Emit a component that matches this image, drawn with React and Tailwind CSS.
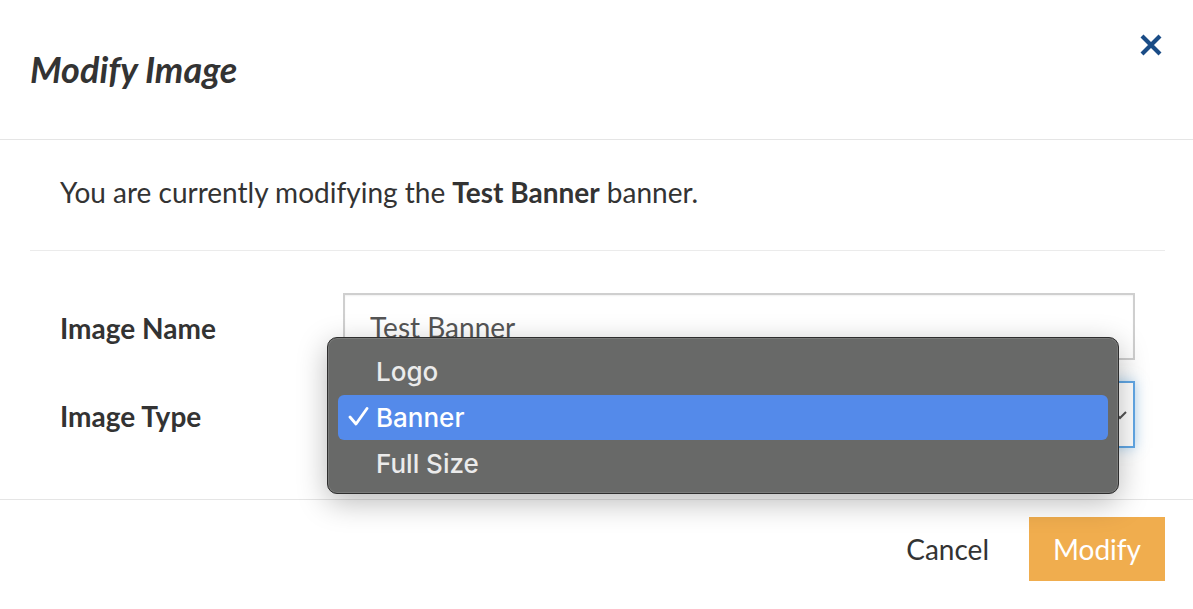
import React from "react";

export default function App() {
  return (
    <div className="relative w-full h-[609px] bg-white text-[#333] overflow-hidden" style={{ fontFamily: "Lato, 'Noto Sans', sans-serif" }}>
      {/* Header */}
      <div className="relative h-[140px] border-b border-[#e5e5e5] px-[30px]">
        <h1 className="pt-[48px] text-[36px] leading-[42px] font-bold italic text-[#333]">Modify Image</h1>
        <button className="absolute top-[33px] right-[30px] w-[24px] h-[24px] text-[#1a4c86]" aria-label="Close">
          <svg viewBox="0 0 24 24" width="24" height="24">
            <path d="M3 3 L21 21 M21 3 L3 21" stroke="currentColor" strokeWidth="4.2" strokeLinecap="butt" fill="none" />
          </svg>
        </button>
      </div>

      {/* Body */}
      <div className="pl-[30px] pr-[28px] h-[359px]">
        <div className="h-[111px] flex items-center px-[30px] pb-[6px] border-b border-[#ebebeb]">
          <p className="text-[28px] leading-[36px]">
            You are currently modifying the <strong className="font-bold">Test Banner</strong> banner.
          </p>
        </div>
        <div className="pl-[30px] pr-[30px] pt-[42px] flex flex-col gap-[21px]">
          <div className="flex items-center">
            <label className="w-[283px] text-[28px] font-bold pt-[3px]">Image Name</label>
            <div className="flex-1 h-[67px] border-2 border-[#cfcfcf] flex items-center px-[25px] text-[28px] text-[#555] shadow-[inset_0_1px_2px_rgba(0,0,0,0.06)]">
              Test Banner
            </div>
          </div>
          <div className="flex items-center">
            <label className="w-[283px] text-[28px] font-bold pt-[3px]">Image Type</label>
            <div className="flex-1 h-[67px] border-2 border-[#62a8e6] flex items-center justify-end pr-[6px] shadow-[0_0_12px_rgba(102,175,233,0.5)]">
              <svg width="14" height="14" viewBox="0 0 14 14">
                <path d="M1 4 L7 10 L13 4" stroke="#555" strokeWidth="2" fill="none" />
              </svg>
            </div>
          </div>
        </div>
      </div>

      {/* Footer */}
      <div className="border-t border-[#e5e5e5] flex items-start justify-end pr-[28px] pt-[17px]">
        <button className="mt-[15px] mr-[40px] text-[28px] leading-[34px] text-[#333]">Cancel</button>
        <button className="w-[136px] h-[64px] bg-[#f0ad4e] text-white text-[28px]">Modify</button>
      </div>

      {/* Native-style dropdown menu */}
      <div
        className="absolute left-[327px] top-[337px] w-[792px] h-[157px] rounded-[10px] bg-[#686968] border border-[#2e2e2e] shadow-[0_8px_30px_rgba(0,0,0,0.28),inset_0_0_0_1px_rgba(255,255,255,0.12)] pt-[10px] px-[10px] text-[#ebebeb] font-medium"
        style={{ fontFamily: "Inter, 'Noto Sans', sans-serif" }}
      >
        <div className="h-[46px] flex items-center pl-[38px] text-[26px]">Logo</div>
        <div className="h-[45px] mt-[1px] flex items-center rounded-[6px] bg-[#548aea] text-white text-[26px] relative">
          <svg className="absolute left-[10px] top-[12px]" width="21" height="19" viewBox="0 0 21 19">
            <path d="M2 10 L8 17 L19 1.5" stroke="white" strokeWidth="2.8" fill="none" strokeLinecap="round" strokeLinejoin="round" />
          </svg>
          <span className="pl-[38px]">Banner</span>
        </div>
        <div className="h-[46px] flex items-center pl-[38px] text-[26px]">Full Size</div>
      </div>
    </div>
  );
}
